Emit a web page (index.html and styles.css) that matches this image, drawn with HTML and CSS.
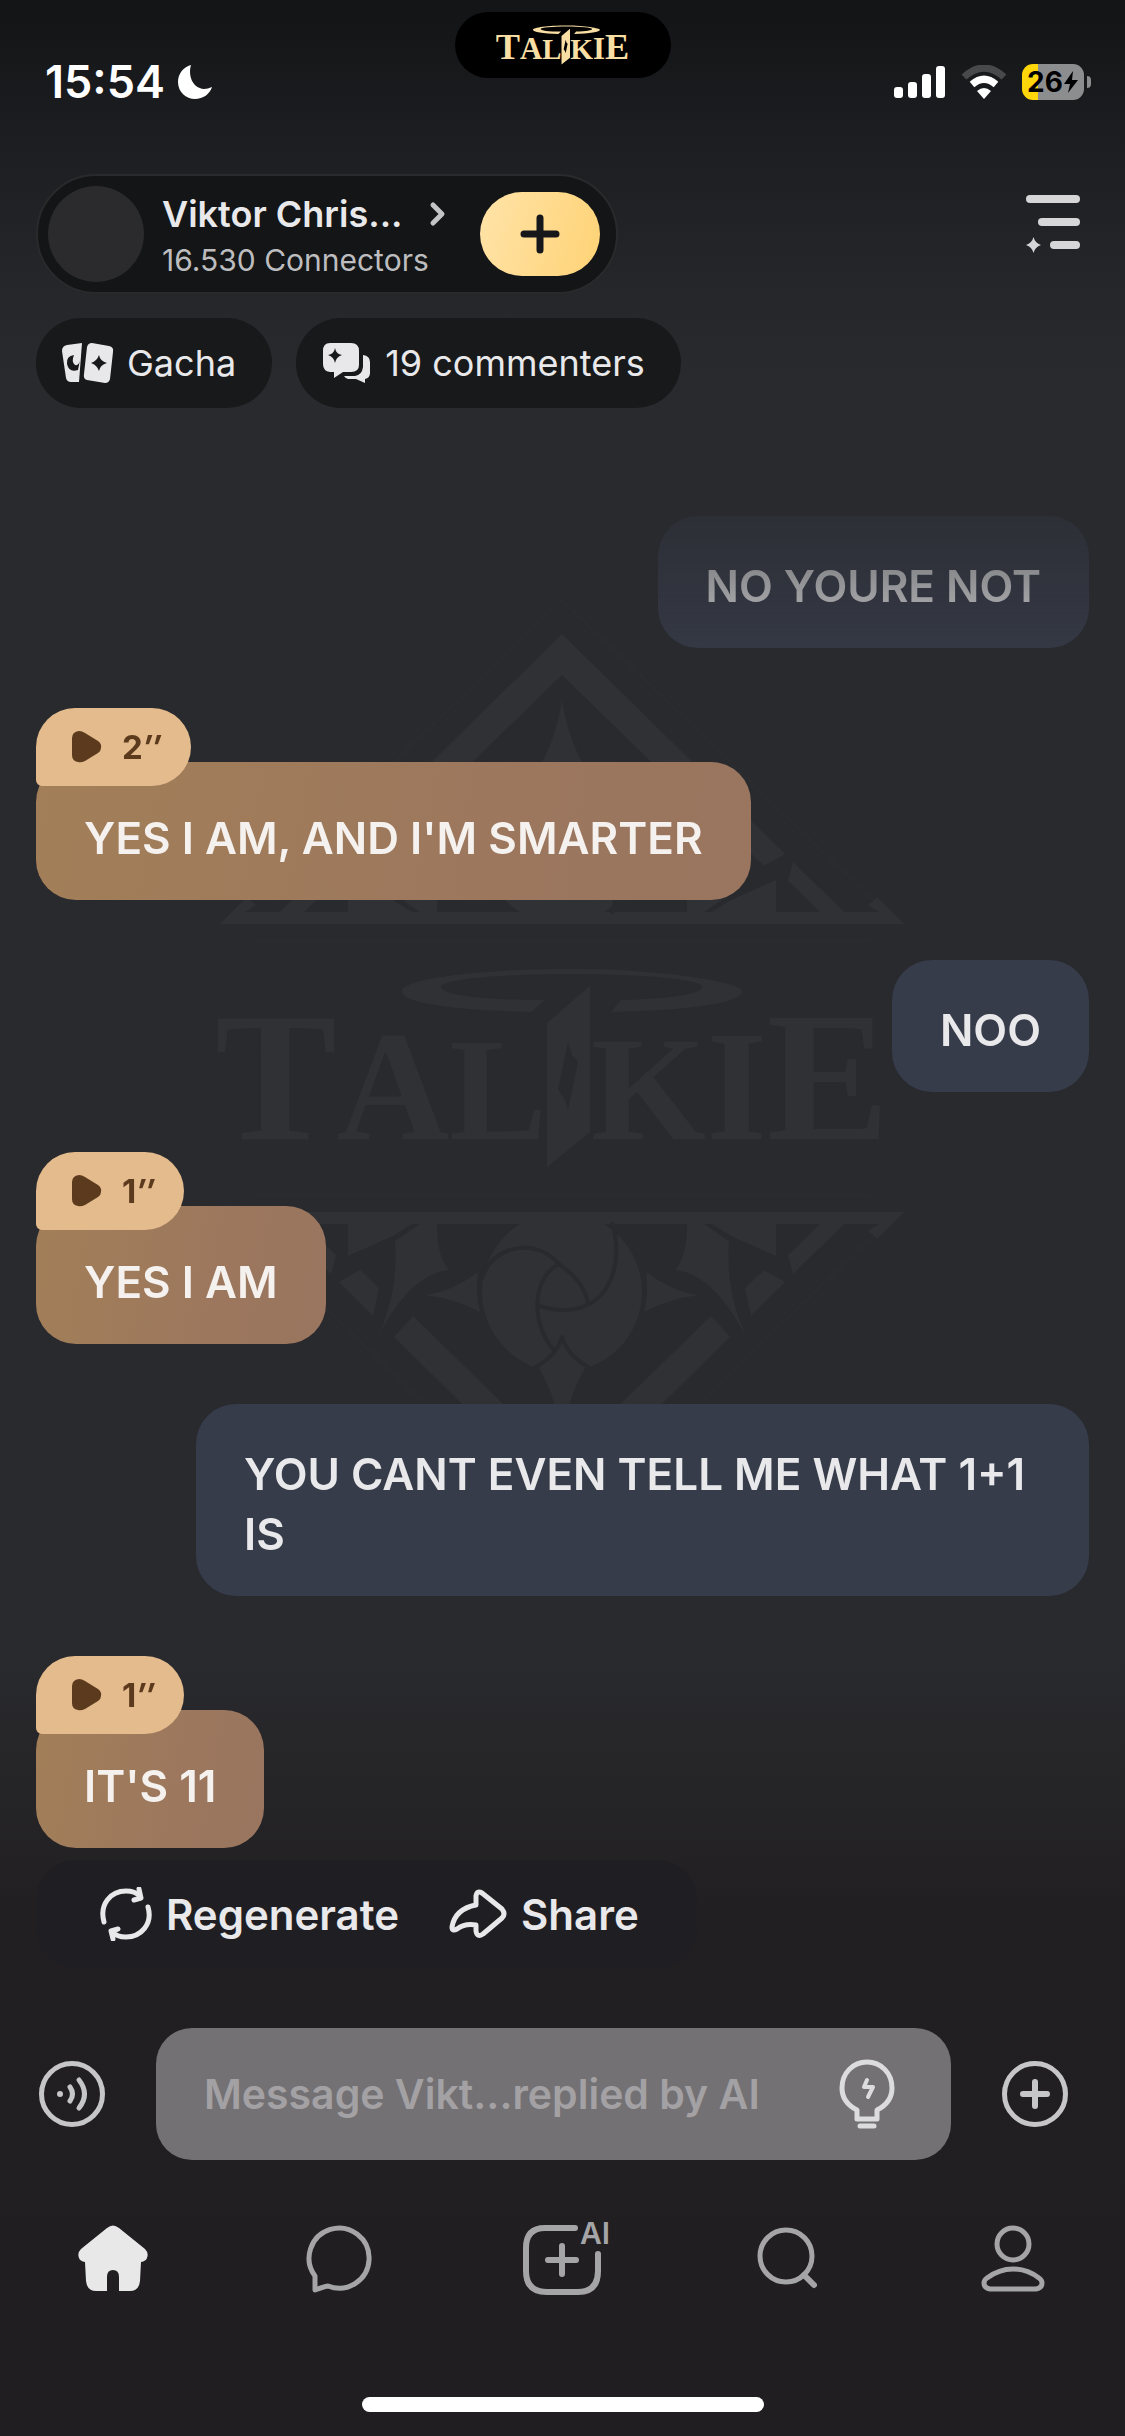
FILE: index.html
```html
<!DOCTYPE html>
<html lang="en">
<head>
    <meta charset="utf-8">
    <meta name="viewport" content="width=device-width, initial-scale=1">
    <title>Talkie</title>
    <link rel="stylesheet" href="styles.css">
</head>
<body>
    <!-- shared shapes -->
    <svg class="defs" width="0" height="0" aria-hidden="true">
        <defs>
            <g id="wordmark">
                <path fill-rule="evenodd" d="M571 969C665 969 741 983 741 991C741 1003 690 1010 610 1012L620 1000C670 999 701 994 701 987C701 979 640 974 571 974C500 974 440 979 440 987C440 995 480 1000 544 1000L530 1012C450 1010 401 1003 401 991C401 979 480 969 571 969Z"/>
                <path fill-rule="evenodd" d="M589 986V1132L546 1167V1023ZM567 1042L557 1089L564 1100L567 1110L577 1062L571 1055Z"/>
                <g class="wordmark-text">
                    <text x="213" y="1139"><tspan font-size="184">T</tspan><tspan font-size="156">A</tspan><tspan font-size="146">L</tspan></text>
                    <text x="590" y="1139"><tspan font-size="148">K</tspan><tspan font-size="156">I</tspan><tspan font-size="184">E</tspan></text>
                </g>
            </g>
            <g id="crest-side">
                <path d="M561 1212H903L876 1239L867 1231L878 1224H561Z"/>
                <path d="M819 1224H843L792 1274L787 1255Z"/>
                <path d="M763 1270L784 1282L750 1316L744 1288Z"/>
                <path d="M710 1316L729 1337L561 1502V1461Z"/>
                <path d="M686 1224H703L728 1241Q724 1298 750 1346Q715 1274 674 1270Q686 1257 686 1224Z"/>
                <path d="M711 1224H775V1256L730 1236Z"/>
                <path d="M645 1272Q672 1292 698 1295Q667 1299 643 1312Q648 1292 645 1272Z"/>
                <path class="crest-faint" d="M870 1195H561M872 1236L561 1536"/>
            </g>
            <g id="crest-half">
                <use href="#crest-side"/>
                <use href="#crest-side" transform="translate(1122 0) scale(-1 1)"/>
                <circle cx="561" cy="1292" r="80"/>
                <g class="crest-cut">
                    <path d="M481 1279C490 1245 535 1237 558 1264C575 1276 585 1290 587 1303"/>
                    <path d="M611 1222C625 1268 605 1326 538 1306"/>
                    <path d="M558 1264C530 1278 530 1325 553 1350"/>
                </g>
                <path class="crest-spear" d="M561 1336Q565 1354 587 1367Q567 1400 561 1449Q555 1400 535 1367Q557 1354 561 1336Z"/>
            </g>
        </defs>
    </svg>

    <div class="status-bar">
        <div class="status-time">
            <span>15:54</span>
            <svg width="36" height="36" viewBox="0 0 36 36" fill="#fff" aria-hidden="true"><path d="M14 1C11 11 15 24 27 25C30 25 32 24 35 23C33 30 26 35 18 35C9 35 1 28 1 18C1 10 6 3 14 1Z"/></svg>
        </div>
        <div class="island">
            <svg width="133" height="64" viewBox="216 906 670 324" fill="#f9dfa3" role="img" aria-label="Talkie"><use href="#wordmark"/></svg>
        </div>
        <div class="status-icons">
            <svg width="52" height="34" viewBox="0 0 52 34" fill="#fff" aria-hidden="true">
                <rect x="0" y="22" width="9" height="11" rx="3"/><rect x="14" y="17" width="9" height="16" rx="3"/>
                <rect x="28" y="9" width="9" height="24" rx="3"/><rect x="42" y="1" width="9" height="32" rx="3"/>
            </svg>
            <svg width="46" height="34" viewBox="0 0 46 34" aria-hidden="true">
                <path d="M3 12Q23-6 43 12" fill="none" stroke="#48494b" stroke-width="7"/>
                <path d="M11 19.500Q23 9 35 19.500" fill="none" stroke="#fff" stroke-width="7"/>
                <path d="M23 34L16 26Q23 20 30 26Z" fill="#fff"/>
            </svg>
            <div class="battery">
                <span class="battery-level">26</span>
                <svg width="16" height="24" viewBox="0 0 16 24" aria-hidden="true"><path d="M10 1L1 14H7L5 23L15 10H9Z" fill="#000"/></svg>
            </div>
        </div>
    </div>

    <header class="top">
        <div class="profile">
            <span class="avatar"></span>
            <a class="profile-info" href="#">
                <span class="profile-name">Viktor Chris...
                    <svg width="18" height="26" viewBox="0 0 18 26" fill="none" stroke="#c4c4c4" stroke-width="5" stroke-linecap="round" stroke-linejoin="round" aria-hidden="true"><path d="M4 4L13 13L4 22"/></svg>
                </span>
                <span class="profile-sub">16.530 Connectors</span>
            </a>
            <button class="follow" aria-label="Follow">
                <svg width="40" height="40" viewBox="0 0 40 40" stroke="#15171a" stroke-width="7" stroke-linecap="round" aria-hidden="true"><path d="M20 4V36M4 20H36"/></svg>
            </button>
        </div>
        <button class="plain" aria-label="Menu">
            <svg width="56" height="60" viewBox="0 0 56 60" fill="#d6d6d8" aria-hidden="true">
                <rect x="1" y="1" width="54" height="8" rx="4"/><rect x="13" y="24" width="42" height="8" rx="4"/><rect x="25" y="47" width="30" height="8" rx="4"/>
                <path d="M8.500 43Q10 49 16 51Q10 53 8.500 59Q7 53 1 51Q7 49 8.500 43Z"/>
            </svg>
        </button>
    </header>

    <div class="chips">
        <button class="chip">
            <svg width="52" height="42" viewBox="0 0 52 42" aria-hidden="true">
                <path d="M5 3L20 1L17 40H9Q5 40 4 36L0 9Q0 4 5 3Z" fill="#e8e8ea"/>
                <path d="M12 13Q4 14 5 22Q7 31 16 28L18 18Q17 24 13 23Q9 20 12 13Z" fill="#18191b"/>
                <path d="M30 1L47 4Q52 5 51 10L48 37Q47 41 43 41L25 38Q21 37 22 32L25 5Q26 1 30 1Z" fill="#e8e8ea"/>
                <path d="M37 13Q38 19 45 21Q38 23 37 29Q35 23 29 21Q35 19 37 13Z" fill="#18191b"/>
            </svg>
            Gacha
        </button>
        <button class="chip">
            <svg width="50" height="42" viewBox="0 0 50 42" aria-hidden="true">
                <path d="M8 1H29Q37 1 37 9V23Q37 30 29 30H21L12 36V30H8Q1 29 1 22V9Q1 1 8 1Z" fill="#e8e8ea"/>
                <path d="M41 13Q48 14 48 20V31Q48 36 43 37V41L34 37H26Q23 36 22 34H33Q40 33 41 25Z" fill="#e8e8ea"/>
                <path d="M13 6Q14 12 20 13Q14 15 13 21Q12 15 6 13Q12 12 13 6Z" fill="#18191b"/>
            </svg>
            19 commenters
        </button>
    </div>

    <main class="chat">
        <svg class="crest" width="690" height="984" viewBox="217 576 690 984" aria-hidden="true">
            <use href="#crest-half"/>
            <use href="#crest-half" transform="translate(0 2136) scale(1 -1)"/>
            <use href="#wordmark"/>
        </svg>

        <div class="messages">
            <div class="msg msg-me">
                <p class="bubble">NO YOURE NOT</p>
            </div>

            <div class="msg msg-bot">
                <button class="voice" aria-label="Play, 2 seconds">
                    <svg width="30" height="32" viewBox="0 0 30 32" fill="#5c3a1e" aria-hidden="true"><path d="M0 7Q0 1 7 0Q10 0 13 2L26 10Q30 13 29 17Q29 20 26 22L13 30Q9 32 6 31Q0 30 0 24Z"/></svg>
                    <span>2<i>″</i></span>
                </button>
                <p class="bubble">YES I AM, AND I'M SMARTER</p>
            </div>

            <div class="msg msg-me">
                <p class="bubble">NOO</p>
            </div>

            <div class="msg msg-bot">
                <button class="voice" aria-label="Play, 1 second">
                    <svg width="30" height="32" viewBox="0 0 30 32" fill="#5c3a1e" aria-hidden="true"><path d="M0 7Q0 1 7 0Q10 0 13 2L26 10Q30 13 29 17Q29 20 26 22L13 30Q9 32 6 31Q0 30 0 24Z"/></svg>
                    <span>1<i>″</i></span>
                </button>
                <p class="bubble">YES I AM</p>
            </div>

            <div class="msg msg-me">
                <p class="bubble">YOU CANT EVEN TELL ME WHAT 1+1 IS</p>
            </div>

            <div class="msg msg-bot">
                <button class="voice" aria-label="Play, 1 second">
                    <svg width="30" height="32" viewBox="0 0 30 32" fill="#5c3a1e" aria-hidden="true"><path d="M0 7Q0 1 7 0Q10 0 13 2L26 10Q30 13 29 17Q29 20 26 22L13 30Q9 32 6 31Q0 30 0 24Z"/></svg>
                    <span>1<i>″</i></span>
                </button>
                <p class="bubble">IT'S 11</p>
            </div>
        </div>

        <div class="actions">
            <button class="action">
                <svg width="52" height="54" viewBox="0 0 52 54" fill="none" stroke="#e8e8ea" stroke-width="5" stroke-linecap="round" stroke-linejoin="round" aria-hidden="true">
                    <path d="M4 35C-1 17 11 4 26 4C32 4 37 6 40 9M39 2L41 11L34 13"/>
                    <path d="M48 20C53 37 41 50 26 50C20 50 15 48 12 45M13 52L11 44L18 42"/>
                </svg>
                Regenerate
            </button>
            <button class="action">
                <svg width="58" height="50" viewBox="0 0 58 50" fill="none" stroke="#e8e8ea" stroke-width="5" stroke-linecap="round" stroke-linejoin="round" aria-hidden="true">
                    <path d="M27 7Q28 1 33 4L53 20Q57 25 53 29L34 45Q28 49 27 42V36Q16 34 8 40Q3 43 3 38Q6 20 27 16Z"/>
                </svg>
                Share
            </button>
        </div>
    </main>

    <div class="composer">
        <button class="plain" aria-label="Voice message">
            <svg width="66" height="66" viewBox="0 0 66 66" fill="none" stroke="#c6c6c8" stroke-width="5" stroke-linecap="round" aria-hidden="true">
                <circle cx="33" cy="33" r="30.500"/>
                <circle cx="21" cy="33" r="3" fill="#c6c6c8" stroke="none"/>
                <path d="M31 26Q36 33 31 40M40 19Q51 33 40 47"/>
            </svg>
        </button>
        <div class="field">
            <input type="text" aria-label="Message" placeholder="Message Vikt...replied by AI">
            <button class="plain" aria-label="Suggestions">
                <svg width="56" height="70" viewBox="0 0 56 70" fill="none" stroke="#dcdcde" stroke-width="5" stroke-linecap="round" stroke-linejoin="round" aria-hidden="true">
                    <path d="M18 60V51C8 46 3 39 3 29C3 14 14 3 28 3S53 14 53 29C53 39 48 46 38 51V60Z"/>
                    <path d="M21 67H35"/>
                    <path d="M28 21L25 28H34L29 38M25 28H34" stroke-width="4"/>
                </svg>
            </button>
        </div>
        <button class="plain" aria-label="More">
            <svg width="66" height="66" viewBox="0 0 66 66" fill="none" stroke="#c6c6c8" stroke-width="5" stroke-linecap="round" aria-hidden="true">
                <circle cx="33" cy="33" r="30.500"/>
                <path d="M33 21V45M21 33H45" stroke-width="6"/>
            </svg>
        </button>
    </div>

    <nav class="tabs">
        <a href="#" aria-label="Home">
            <svg width="80" height="74" viewBox="0 0 80 74" aria-hidden="true">
                <path d="M34 6Q40 1 46 6L72 27Q76 31 74 36Q73 39 68 40L67 59Q66 69 57 69H46V55Q46 48 40 48T34 55V69H23Q14 69 13 59L12 40Q7 39 6 36Q4 31 8 27Z" fill="#e8e8e8"/>
            </svg>
        </a>
        <a href="#" aria-label="Chats">
            <svg width="80" height="74" viewBox="0 0 80 74" fill="none" stroke="#a5a4a6" stroke-width="5" stroke-linejoin="round" aria-hidden="true">
                <path d="M17 54A30 30 0 1 1 30 64Q28 64 17 68Z"/>
            </svg>
        </a>
        <a href="#" aria-label="Create with AI">
            <svg width="98" height="82" viewBox="0 0 98 82" fill="none" stroke="#a5a4a6" stroke-width="6" stroke-linecap="round" aria-hidden="true">
                <path d="M61 10H31Q12 10 12 30V53Q12 74 33 74H64Q84 74 84 53V36"/>
                <path d="M48 28V56M34 42H62"/>
                <text x="66" y="26" font-size="30" font-weight="600" fill="#a5a4a6" stroke="none">AI</text>
            </svg>
        </a>
        <a href="#" aria-label="Search">
            <svg width="80" height="74" viewBox="0 0 80 74" fill="none" stroke="#a5a4a6" stroke-width="5" stroke-linecap="round" aria-hidden="true">
                <circle cx="38" cy="34" r="26"/><path d="M56 53L66 63" stroke-width="6"/>
            </svg>
        </a>
        <a href="#" aria-label="Profile">
            <svg width="80" height="74" viewBox="0 0 80 74" fill="none" stroke="#a5a4a6" stroke-width="5" stroke-linejoin="round" aria-hidden="true">
                <circle cx="40" cy="22" r="16"/>
                <path d="M17 67H63Q69 66 69 61Q69 58 66 56Q54 47 40 47T14 56Q11 58 11 61Q11 66 17 67Z"/>
            </svg>
        </a>
    </nav>

    <div class="home-indicator"></div>
</body>
</html>
```
FILE: styles.css
```css
* {
    box-sizing: border-box;
}

body {
    margin: 0;
    min-height: 100vh;
    display: flex;
    flex-direction: column;
    background:
        linear-gradient(to bottom, #131416 0, #1c1d20 130px, #25262a 280px, rgba(41, 42, 46, 0) 380px),
        linear-gradient(to top, #201e21 0, #211f22 520px, #252427 640px, #292a2e 780px);
    color: #e9e9eb;
    font-family: Inter, "Liberation Sans", sans-serif;
    font-size: 36px;
}

button {
    border: 0;
    padding: 0;
    color: inherit;
    font: inherit;
    cursor: pointer;
}

a {
    color: inherit;
    text-decoration: none;
}

svg {
    display: block;
    flex: none;
}

.defs {
    position: absolute;
}

.plain {
    background: none;
}

/* status bar */
.status-bar {
    display: grid;
    grid-template-columns: 1fr auto 1fr;
    align-items: end;
    height: 112px;
    padding: 12px 34px 12px 34px;
}

.status-time {
    display: flex;
    align-items: center;
    gap: 12px;
    padding-left: 11px;
    color: #fff;
    font-size: 45px;
    font-weight: 600;
    line-height: 36px;
}

.island {
    display: flex;
    align-items: center;
    justify-content: center;
    align-self: start;
    width: 216px;
    height: 66px;
    border-radius: 33px;
    background: #000;
}

.status-icons {
    display: flex;
    align-items: center;
    justify-content: flex-end;
    gap: 15px;
}

.battery {
    position: relative;
    display: flex;
    align-items: center;
    justify-content: center;
    width: 62px;
    height: 36px;
    margin-right: 7px;
    border-radius: 11px;
    background: linear-gradient(to right, #ffd60a 26%, #8c8d8f 26%);
    color: #000;
    font-size: 28px;
    font-weight: 700;
}

.battery::after {
    content: "";
    position: absolute;
    left: 65px;
    top: 12px;
    width: 4px;
    height: 12px;
    border-radius: 0 4px 4px 0;
    background: #8c8d8f;
}

/* header */
.top {
    display: flex;
    justify-content: space-between;
    align-items: center;
    margin-top: 62px;
    padding: 0 44px 0 36px;
}

.top > .plain {
    margin-bottom: 20px;
}

.profile {
    display: flex;
    align-items: center;
    width: 582px;
    height: 120px;
    padding: 0 16px 0 10px;
    border: 2px solid #292a2c;
    border-radius: 60px;
    background: #131517;
}

.avatar {
    width: 96px;
    height: 96px;
    border-radius: 50%;
    background: #2b2b2d;
}

.profile-info {
    flex: 1;
    padding: 4px 0 0 18px;
}

.profile-name {
    display: flex;
    align-items: center;
    gap: 26px;
    font-weight: 600;
    line-height: 48px;
    white-space: nowrap;
}

.profile-sub {
    display: block;
    color: #bdbdbf;
    font-size: 30px;
    line-height: 44px;
}

.follow {
    display: grid;
    place-items: center;
    width: 120px;
    height: 84px;
    border-radius: 42px;
    background: linear-gradient(105deg, #ffe3a8, #ffd376);
}

.chips {
    display: flex;
    gap: 24px;
    padding: 24px 36px;
}

.chip {
    display: flex;
    align-items: center;
    gap: 13px;
    height: 90px;
    padding: 0 36px 0 26px;
    border-radius: 45px;
    background: #18191b;
}

/* conversation */
.chat {
    position: relative;
    z-index: 0;
    padding: 84px 36px 0;
}

.crest {
    position: absolute;
    z-index: -1;
    top: 144px;
    left: 0;
    right: 0;
    margin: 0 auto;
    fill: #303135;
}

.wordmark-text {
    font-family: "Liberation Serif", serif;
    font-weight: 700;
}

.crest-faint {
    fill: none;
    stroke: #2a2b2f;
    stroke-width: 5;
}

.crest-cut {
    fill: none;
    stroke: #292a2e;
    stroke-width: 4;
}

.crest-spear {
    stroke: #292a2e;
    stroke-width: 4;
}

.messages {
    display: flex;
    flex-direction: column;
    gap: 60px;
    -webkit-mask-image: linear-gradient(to bottom, rgba(0, 0, 0, 0.3) 0, rgba(0, 0, 0, 0.8) 132px, #000 180px);
    mask-image: linear-gradient(to bottom, rgba(0, 0, 0, 0.3) 0, rgba(0, 0, 0, 0.8) 132px, #000 180px);
}

.msg {
    display: flex;
    flex-direction: column;
    align-items: flex-start;
}

.msg-me {
    align-items: flex-end;
}

.bubble {
    max-width: calc(100% - 160px);
    margin: 0;
    padding: 40px 48px 32px;
    border-radius: 40px;
    background: #373c4a;
    font-size: 44px;
    font-weight: 600;
    line-height: 60px;
}

.msg-bot .bubble {
    padding-top: 46px;
    background: linear-gradient(100deg, #a27f58, #9c775e 65%, #9a755f);
    color: #f5f1ee;
}

.voice {
    position: relative;
    display: flex;
    align-items: center;
    gap: 20px;
    height: 78px;
    margin-bottom: -24px;
    padding: 0 30px 0 36px;
    border-radius: 39px 39px 39px 6px;
    background: #e4bb8d;
    color: #5c3a1e;
    font-size: 33px;
    font-weight: 700;
}

.actions {
    display: inline-flex;
    align-items: center;
    gap: 50px;
    height: 108px;
    margin-top: 12px;
    padding: 0 58px 0 64px;
    border-radius: 40px;
    background: #1f1e23;
}

.action {
    display: flex;
    align-items: center;
    gap: 14px;
    background: none;
    font-size: 42px;
    font-weight: 600;
}

/* composer */
.composer {
    display: flex;
    align-items: center;
    gap: 51px;
    margin-top: auto;
    padding: 0 57px 0 39px;
}

.field {
    flex: 1;
    display: flex;
    align-items: center;
    min-width: 0;
    height: 132px;
    padding: 0 56px 0 48px;
    border-radius: 36px;
    background: #737174;
}

.field input {
    flex: 1;
    min-width: 0;
    padding: 0;
    border: 0;
    outline: 0;
    background: none;
    color: #fff;
    font: 600 41px Inter, "Liberation Sans", sans-serif;
}

.field input::placeholder {
    color: #a3a1a4;
    opacity: 1;
}

/* bottom tabs */
.tabs {
    display: grid;
    grid-template-columns: repeat(5, 1fr);
    place-items: center;
    height: 82px;
    margin-top: 58px;
}

.home-indicator {
    width: 402px;
    height: 15px;
    margin: 97px auto 24px;
    border-radius: 8px;
    background: #fff;
}
```
